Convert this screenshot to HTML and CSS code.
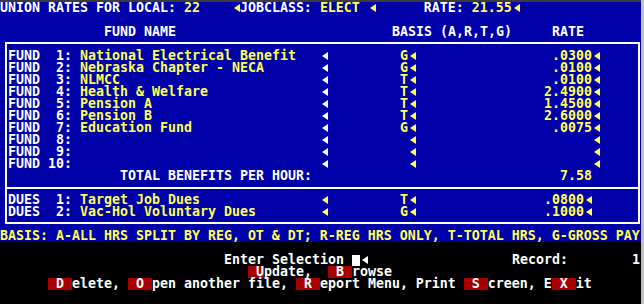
FILE: index.html
```html
<!DOCTYPE html>
<html lang="en">

<head>
    <meta charset="UTF-8">
    <title>Union Rates</title>
    <link rel="stylesheet" href="styles.css">
</head>

<body>
    <div class="screen">
        <div class="panel">
            <!-- linha de cabeçalho -->
            <div class="line">UNION RATES FOR LOCAL: <span class="y">22    </span><i class="ar y"></i>JOBCLASS: <span class="y">ELECT </span><i class="ar y"></i>      RATE: <span class="y">21.55</span><i class="ar y"></i></div>
            <div class="line"></div>
            <div class="line heads">
                <span class="h-fund">FUND NAME</span>
                <span class="h-basis">BASIS (A,R,T,G)</span>
                <span class="h-rate">RATE</span>
            </div>

            <div class="box">
                <div class="frow"><span class="lbl">FUND  1:</span><span class="name">National Electrical Benefit</span><i class="ar"></i><span class="basis">G</span><i class="ar y"></i><span class="rate">.0300</span><i class="ar y"></i></div>
                <div class="frow"><span class="lbl">FUND  2:</span><span class="name">Nebraska Chapter - NECA</span><i class="ar"></i><span class="basis">G</span><i class="ar y"></i><span class="rate">.0100</span><i class="ar y"></i></div>
                <div class="frow"><span class="lbl">FUND  3:</span><span class="name">NLMCC</span><i class="ar"></i><span class="basis">T</span><i class="ar y"></i><span class="rate">.0100</span><i class="ar y"></i></div>
                <div class="frow"><span class="lbl">FUND  4:</span><span class="name">Health &amp; Welfare</span><i class="ar"></i><span class="basis">T</span><i class="ar y"></i><span class="rate">2.4900</span><i class="ar y"></i></div>
                <div class="frow"><span class="lbl">FUND  5:</span><span class="name">Pension A</span><i class="ar"></i><span class="basis">T</span><i class="ar y"></i><span class="rate">1.4500</span><i class="ar y"></i></div>
                <div class="frow"><span class="lbl">FUND  6:</span><span class="name">Pension B</span><i class="ar"></i><span class="basis">T</span><i class="ar y"></i><span class="rate">2.6000</span><i class="ar y"></i></div>
                <div class="frow"><span class="lbl">FUND  7:</span><span class="name">Education Fund</span><i class="ar"></i><span class="basis">G</span><i class="ar y"></i><span class="rate">.0075</span><i class="ar y"></i></div>
                <div class="frow"><span class="lbl">FUND  8:</span><span class="name"></span><i class="ar"></i><span class="basis"></span><i class="ar y"></i><span class="rate"></span><i class="ar y"></i></div>
                <div class="frow"><span class="lbl">FUND  9:</span><span class="name"></span><i class="ar"></i><span class="basis"></span><i class="ar y"></i><span class="rate"></span><i class="ar y"></i></div>
                <div class="frow"><span class="lbl">FUND 10:</span><span class="name"></span><i class="ar"></i><span class="basis"></span><i class="ar y"></i><span class="rate"></span><i class="ar y"></i></div>
                <div class="frow"><span class="total">TOTAL BENEFITS PER HOUR:</span><span class="rate white">7.58</span></div>

                <div class="sep"></div>

                <div class="frow dues"><span class="lbl">DUES  1:</span><span class="name">Target Job Dues</span><i class="ar y"></i><span class="basis">T</span><i class="ar y"></i><span class="rate">.0800</span><i class="ar y"></i></div>
                <div class="frow dues"><span class="lbl">DUES  2:</span><span class="name">Vac-Hol Voluntary Dues</span><i class="ar y"></i><span class="basis">G</span><i class="ar y"></i><span class="rate">.1000</span><i class="ar y"></i></div>
            </div>

            <div class="line y">BASIS: A-ALL HRS SPLIT BY REG, OT &amp; DT; R-REG HRS ONLY, T-TOTAL HRS, G-GROSS PAY</div>
        </div>

        <!-- menu -->
        <div class="menu">
            <div class="line"></div>
            <div class="line">
                <span class="sel">Enter Selection <b class="cur"></b><i class="ar"></i></span>
                <span class="rec">Record:</span>
                <span class="recno">1</span>
            </div>
            <div class="line keys-1"><b class="key"> U</b>pdate,  <b class="key"> B </b>rowse</div>
            <div class="line keys-2"><b class="key"> D </b>elete, <b class="key"> O </b>pen another file, <b class="key"> R </b>eport Menu, Print <b class="key"> S </b>creen, E<b class="key"> X </b>it</div>
        </div>
    </div>
</body>

</html>
```

FILE: styles.css
```css
/* Tela em modo texto: 80 colunas de 8px, linhas de 12px */
* {
    margin: 0;
    padding: 0;
    box-sizing: border-box;
}

body {
    background: #c0c0c0;
    font-family: 'DejaVu Sans Mono', monospace;
    font-weight: bold;
    font-size: 13.29px;
    line-height: 12px;
    color: #fff;
}

.screen {
    width: 641px;
    height: 304px;
    background: #000;
    border-top: 2px solid #3c3c3c;
}

.panel {
    background: #0000a8;
}

.line {
    height: 12px;
    white-space: pre;
    display: flex;
}

.y {
    color: #ffff55;
}

.white {
    color: #fff;
}

/* seta de fim de campo */
.ar {
    display: inline-block;
    width: 8px;
    height: 12px;
    flex: none;
    position: relative;
    vertical-align: top;
}

.ar::after {
    content: "";
    position: absolute;
    left: 2px;
    top: 2px;
    border-right: 6px solid currentColor;
    border-top: 4px solid transparent;
    border-bottom: 4px solid transparent;
}

/* Cabeçalhos das colunas */
.h-fund {
    margin-left: 104px;
    width: 72px;
}

.h-basis {
    margin-left: 216px;
    width: 120px;
}

.h-rate {
    margin-left: 40px;
}

/* Caixa com os fundos */
.box {
    margin: 4px 0 6px 5px;
    width: 635px;
    border: 2px solid #fff;
    padding: 6px 0 4px 1px;
}

.frow {
    display: flex;
    height: 12px;
    white-space: pre;
}

.lbl {
    width: 72px;
}

.name {
    width: 240px;
    color: #ffff55;
}

.basis {
    margin-left: 72px;
    width: 8px;
    color: #ffff55;
}

.rate {
    margin-left: 128px;
    width: 48px;
    text-align: right;
    color: #ffff55;
}

.dues .rate {
    width: 40px;
}

.total {
    padding-left: 112px;
    width: 536px;
}

.total + .rate {
    margin-left: 0;
}

.sep {
    margin: 5px -1px 5px -1px;
    border-top: 2px solid #fff;
}

/* Menu inferior */
.sel {
    margin-left: 224px;
}

.cur {
    display: inline-block;
    width: 8px;
    height: 11px;
    margin-top: 1px;
    background: #fff;
    vertical-align: top;
}

.rec {
    margin-left: 144px;
}

.recno {
    margin-left: 64px;
}

.keys-1 {
    padding-left: 248px;
}

.keys-2 {
    padding-left: 48px;
}

.key {
    display: inline-block;
    height: 12px;
    background: #a80000;
    font-weight: bold;
    vertical-align: top;
}
```
